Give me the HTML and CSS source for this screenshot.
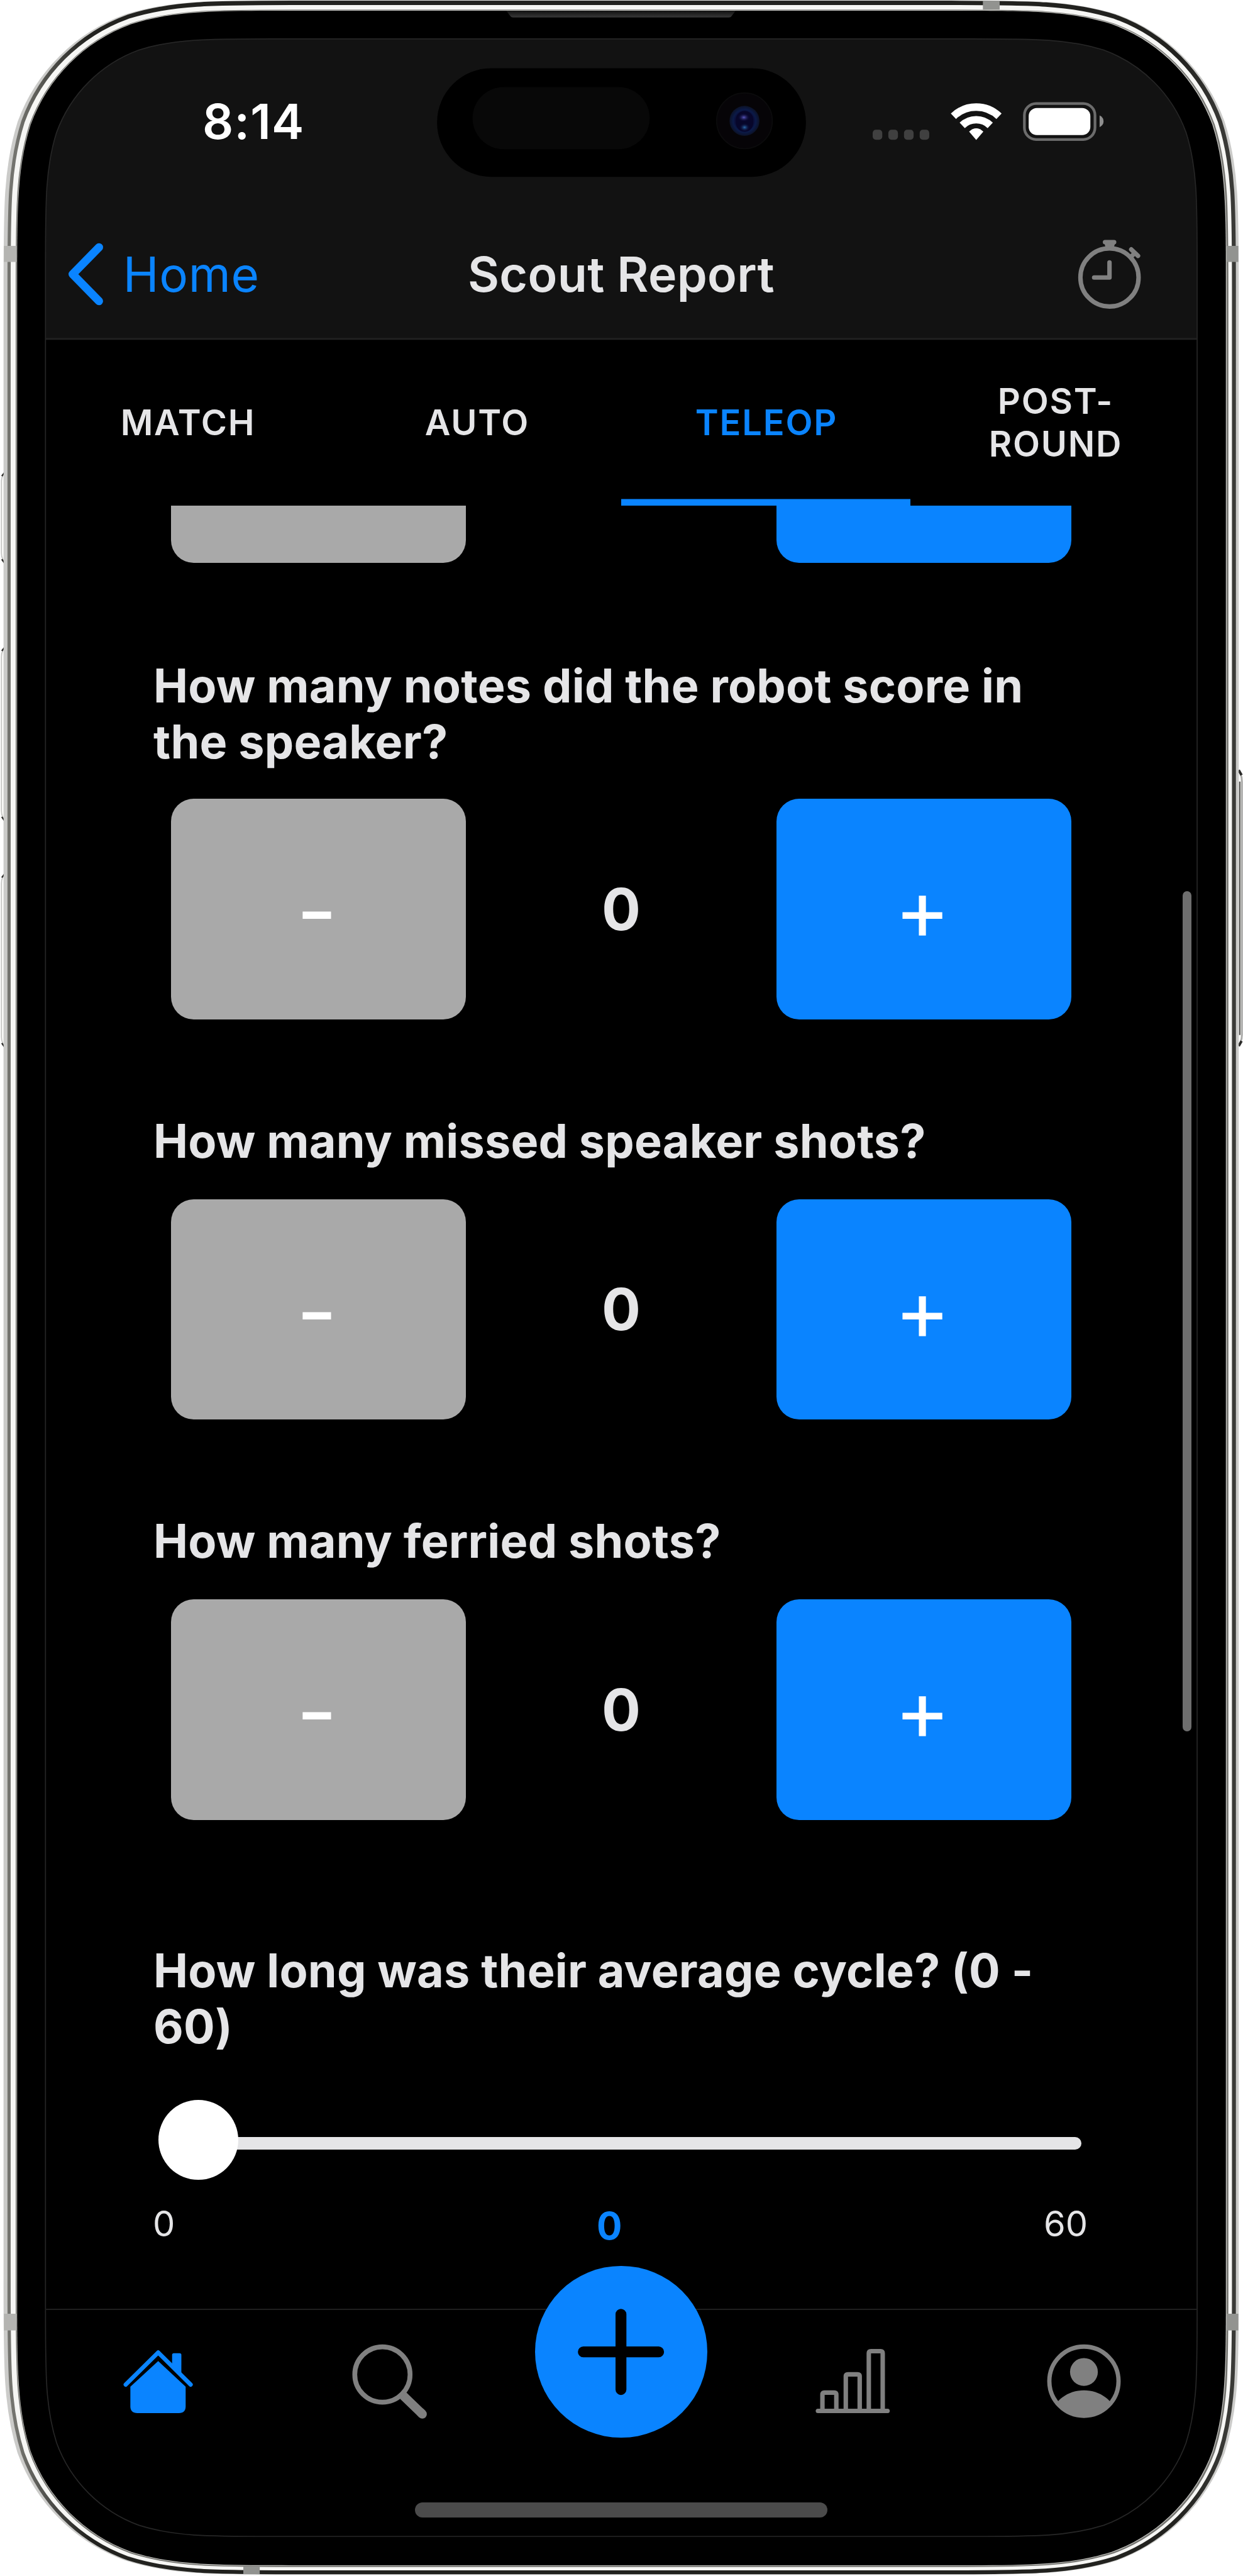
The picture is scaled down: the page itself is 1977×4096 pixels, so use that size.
FILE: index.html
```html
<!DOCTYPE html>
<html lang="en">
<head>
<meta charset="utf-8">
<title>Scout Report</title>
<link rel="stylesheet" href="styles.css">
</head>
<body>
<div class="phone">
  <svg class="frame" viewBox="0 0 3484 7218" preserveAspectRatio="none" aria-hidden="true">
    <defs>
      <path id="body" d="M-1694,-2805.5c0,-222.7 0,-334.1 37.9,-454c47.6,-130.9 150.7,-234 281.6,-281.6c119.9,-37.9 231.3,-37.9 454,-37.9H920.5c222.7,0 334.1,0 454,37.9c130.9,47.6 234,150.7 281.6,281.6c37.9,119.9 37.9,231.3 37.9,454V2805.5c0,222.7 0,334.1 -37.9,454c-47.6,130.9 -150.7,234 -281.6,281.6c-119.9,37.9 -231.3,37.9 -454,37.9H-920.5c-222.7,0 -334.1,0 -454,-37.9c-130.9,-47.6 -234,-150.7 -281.6,-281.6c-37.9,-119.9 -37.9,-231.3 -37.9,-454Z"/>
      <path id="glass" d="M127.500,743.400c0,-182.7 0,-274 31.1,-372.3c39.1,-107.300 123.6,-191.900 231,-231c98.3,-31.100 189.7,-31.100 372.3,-31.100H2721.100c182.7,0 274,0 372.3,31.1c107.3,39.1 191.9,123.6 231,231c31.1,98.3 31.1,189.7 31.1,372.3V6472.600c0,182.7 0,274 -31.1,372.3c-39.1,107.3 -123.6,191.9 -231,231c-98.3,31.1 -189.7,31.1 -372.3,31.1H761.900c-182.700,0 -274,0 -372.3,-31.1c-107.3,-39.1 -191.9,-123.6 -231,-231c-31.1,-98.3 -31.1,-189.7 -31.1,-372.3Z"/>
      <clipPath id="glass-clip"><use href="#glass"/></clipPath>
      <linearGradient id="steel"><stop offset="0" stop-color="#74746f"/><stop offset=".06" stop-color="#22221f"/><stop offset=".96" stop-color="#22221f"/><stop offset="1" stop-color="#3a3a37"/></linearGradient>
      <linearGradient id="speaker" x2="0" y2="1"><stop offset="0" stop-color="#111"/><stop offset="1" stop-color="#383838"/></linearGradient>
      <radialGradient id="lens"><stop offset="0" stop-color="#0a0a30"/><stop offset=".55" stop-color="#0a0830"/><stop offset=".75" stop-color="#0b1a48"/><stop offset="1" stop-color="#0c1226"/></radialGradient>
      <radialGradient id="glint-top"><stop offset="0" stop-color="#5a58c0"/><stop offset="1" stop-color="#0a0830" stop-opacity="0"/></radialGradient>
      <radialGradient id="glint-bottom"><stop offset="0" stop-color="#2a6cae"/><stop offset="1" stop-color="#0a0830" stop-opacity="0"/></radialGradient>
    </defs>
    <g fill="#fcfcfa" stroke="#c4c4c2" stroke-width="3">
      <path d="M18,1324Q4,1330 4,1350V1550Q4,1570 18,1577"/>
      <path d="M18,1814Q4,1820 4,1840V2272Q4,2292 18,2299"/>
      <path d="M18,2449Q4,2455 4,2475V2906Q4,2926 18,2933"/>
      <path d="M3466,2154Q3481,2166 3481,2190V2900Q3481,2922 3466,2934" stroke="#a8a8a6" stroke-width="5"/>
    </g>
    <g fill="none" stroke="#2a2a28" stroke-width="4">
      <path d="M12,1325L5,1334M12,1577L5,1567M12,1815L5,1824M12,2299L5,2289M12,2450L5,2459M12,2933L5,2923"/>
      <path d="M3472,2158L3480,2172M3472,2931L3480,2917" stroke-width="7"/>
      <path d="M3475,2190V2900" stroke="#555552"/>
    </g>
    <use href="#body" transform="translate(1741 3607.5) scale(1.0041 .9993)" fill="#cbcbc9" stroke="#cbcbc9" stroke-width="60"/>
    <use href="#body" transform="translate(1742.5 3607.5) scale(1.0021 1.0007)" fill="url(#steel)" stroke="url(#steel)" stroke-width="48"/>
    <use href="#body" transform="translate(1741.5 3608) scale(1.0015 1)" fill="#f6f6f4" stroke="#f6f6f4" stroke-width="30"/>
    <use href="#body" transform="translate(1743.5 3610) scale(1.0009 1)" fill="#73736f" stroke="#73736f" stroke-width="8"/>
    <use href="#body" transform="translate(1742.5 3609)" fill="#c2c2be" stroke="#c2c2be" stroke-width="4"/>
    <use href="#body" transform="translate(1742 3609)"/>
    <g fill="#b4b4b1">
      <path d="M11,689H46V734H11ZM11,6483H46V6530H11Z"/>
      <path d="M3438,689H3471V734H3438ZM3438,6483H3471V6530H3438ZM2755,2H2802V27H2755ZM682,7191H728V7213H682Z" fill="#929390"/>
    </g>
    <path d="M1419,30H2062L2050,46Q2048,49 2043,49H1438Q1433,49 1431,46Z" fill="url(#speaker)"/>
    <g clip-path="url(#glass-clip)">
      <rect x="120" y="100" width="3244" height="852" fill="#121212"/>
      <rect x="120" y="947" width="3244" height="5" fill="#212121"/>
    </g>
    <use href="#glass" fill="none" stroke="#262626" stroke-width="3"/>
    <rect x="1225" y="191" width="1034" height="304.500" rx="152"/>
    <rect x="1324.500" y="244" width="496.500" height="174" rx="87" fill="#080808"/>
    <circle cx="2086.700" cy="338.600" r="78" fill="#060407" stroke="#0b0b0c" stroke-width="3"/>
    <circle cx="2086.700" cy="338.600" r="42" fill="url(#lens)"/>
    <rect x="2063" y="311" width="48" height="58" rx="24" fill="#07062a"/>
    <ellipse cx="2085" cy="329" rx="17" ry="12" fill="url(#glint-top)"/>
    <ellipse cx="2087" cy="357" rx="15" ry="12" fill="url(#glint-bottom)"/>
  </svg>

  <main class="screen">
    <header class="status">
      <span class="clock">8:14</span>
      <div class="status-icons">
        <svg class="signal" viewBox="2448 363 159 29"><g fill="#404040"><rect x="2448" y="363.500" width="27" height="28" rx="9"/><rect x="2492" y="363.500" width="27" height="28" rx="9"/><rect x="2536" y="363.500" width="27" height="28" rx="9"/><rect x="2580" y="363.500" width="27" height="28" rx="9"/></g></svg>
        <svg class="wifi" viewBox="-70 -103 140 103"><g fill="none" stroke="#fff" stroke-width="21"><path d="M-63.900,-66.200A92,92 0 0 1 63.900,-66.200M-39.300,-40.600A56.500,56.500 0 0 1 39.300,-40.600"/></g><path d="M-20,-23Q0,-42 20,-23L0,0Z" fill="#fff"/></svg>
        <svg class="battery" viewBox="2869 285 227 110"><rect x="2873" y="289.500" width="198" height="101" rx="33" fill="none" stroke="#6c6c6c" stroke-width="7.500"/><rect x="2885" y="302" width="173" height="76" rx="23" fill="#fff"/><path d="M3084,323Q3095,329 3095,339.500Q3095,350 3084,356Z" fill="#8e8e8e"/></svg>
      </div>
    </header>

    <nav class="navbar">
      <a class="back"><svg class="chevron" viewBox="188 680 100 173"><path d="M277,691L203,766.500L277,842" fill="none" stroke="#0a84ff" stroke-width="23" stroke-linecap="round" stroke-linejoin="round"/></svg><span class="back-label">Home</span></a>
      <h1 class="title">Scout Report</h1>
      <svg class="timer" viewBox="3020 670 182 200"><g fill="none" stroke="#808080" stroke-width="12.500" stroke-linecap="round" stroke-linejoin="round"><circle cx="3111" cy="779.500" r="81.500"/><path d="M3111,737.500V779.800H3068"/><path d="M3098.500,680.500H3124"/><path d="M3172,701L3191,719"/><path d="M3181,712L3172,721" stroke-linecap="butt"/></g><path d="M3097,684H3127L3124,692V698H3099V692Z" fill="#808080"/></svg>
    </nav>

    <div class="tabs">
      <span class="tab">MATCH</span>
      <span class="tab">AUTO</span>
      <span class="tab active">TELEOP</span>
      <span class="tab"><span>POST-<br>ROUND</span></span>
    </div>

    <section class="form">
      <div class="counter clipped"><span class="btn minus"></span><span class="btn plus"></span></div>

      <h2 class="question first">How many notes did the robot score in<br>the speaker?</h2>
      <div class="counter"><span class="btn minus">-</span><span class="count">0</span><span class="btn plus">+</span></div>

      <h2 class="question">How many missed speaker shots?</h2>
      <div class="counter"><span class="btn minus">-</span><span class="count">0</span><span class="btn plus">+</span></div>

      <h2 class="question">How many ferried shots?</h2>
      <div class="counter"><span class="btn minus">-</span><span class="count">0</span><span class="btn plus">+</span></div>

      <h2 class="question cycle">How long was their average cycle? (0 -<br>60)</h2>
      <div class="slider"><span class="thumb"></span><span class="track"></span></div>
      <div class="scale"><span>0</span><span class="value">0</span><span>60</span></div>
      <i class="scrollbar"></i>
    </section>

    <footer class="tabbar">
      <div class="tabbar-items">
        <svg class="home" viewBox="345 6584 196 178"><path fill="#0a84ff" d="M365,6688L443,6616L520,6688V6743Q520,6762 501,6762H385Q365,6762 365,6743Z"/><path fill="#0a84ff" d="M482,6625V6599Q482,6594 487,6594H503Q508,6594 508,6599V6653L482,6627Z"/><path d="M352,6682L443,6592L534,6682" fill="none" stroke="#0a84ff" stroke-width="12" stroke-linecap="round" stroke-linejoin="round"/></svg>
        <svg class="search" viewBox="988 6568 210 208"><g fill="none" stroke="#808080"><circle cx="1073" cy="6652" r="77.500" stroke-width="13.500"/><path d="M1131,6711L1185,6763" stroke-width="25"/><path d="M1180,6758L1185,6763" stroke-width="25" stroke-linecap="round"/></g></svg>
        <div class="fab"><svg class="fab-plus" viewBox="-121 -121 242 242"><path d="M-105.500,0H105.500M0,-105.500V105.500" stroke="#000" stroke-width="30.500" stroke-linecap="round"/></svg></div>
        <svg class="chart" viewBox="2284 6580 209 184"><g fill="none" stroke="#808080" stroke-width="12.500" stroke-linejoin="round" stroke-linecap="round"><path d="M2291,6755.500H2486"/><path d="M2303.500,6755V6710Q2303.500,6704 2309.500,6704H2336.500Q2342.500,6704 2342.500,6710V6755M2369,6755V6659Q2369,6653 2375,6653H2402Q2408,6653 2408,6659V6755M2433.500,6755V6594Q2433.500,6588 2439.500,6588H2466.500Q2472.500,6588 2472.500,6594V6755"/></g></svg>
        <svg class="person" viewBox="2934 6567 208 209"><circle cx="3038" cy="6671.500" r="97" fill="none" stroke="#808080" stroke-width="12"/><circle cx="3038" cy="6645.500" r="39" fill="#808080"/><path d="M2964,6729C2983,6708 3010,6697 3038,6697C3066,6697 3093,6708 3112,6729A94,94 0 0 1 2964,6729Z" fill="#808080"/></svg>
      </div>
      <div class="home-indicator"></div>
    </footer>
  </main>
</div>
</body>
</html>
```
FILE: styles.css
```css
* { box-sizing: border-box; }
body { margin: 0; background: #fff; font-family: Inter, "Liberation Sans", sans-serif; color: #e5e5e7; }
svg { display: block; overflow: visible; }
.phone { position: relative; width: 1977px; height: 4096px; overflow: hidden; }
.frame { position: absolute; inset: 0; width: 1977px; height: 4096px; }
.screen { position: relative; width: 1832px; margin-left: 72px; padding-top: 62px; }

.status { display: flex; justify-content: space-between; height: 288px; padding: 91px 148px 0 250px; }
.clock { font-size: 77px; line-height: 80px; font-weight: 600; color: #fff; letter-spacing: 1.200px; }
.status-icons { display: flex; align-items: flex-end; gap: 35px; height: 69px; }
.signal { width: 90px; height: 16.500px; }
.wifi { width: 79.400px; height: 58.400px; }
.battery { width: 128.800px; height: 62.400px; margin-bottom: -2px; }

.navbar { display: grid; grid-template-columns: 1fr auto 1fr; align-items: center; height: 190px; padding-bottom: 18px; }
.back { display: flex; align-items: center; gap: 32px; margin-left: 35px; color: #0a84ff; }
.chevron { width: 56.700px; height: 98px; }
.back-label { font-size: 76.500px; line-height: 80px; letter-spacing: .700px; }
.title { margin: 0; font-size: 77px; line-height: 80px; font-weight: 600; letter-spacing: .300px; }
.timer { width: 103.300px; height: 113.500px; margin-right: 88px; justify-self: end; }

.tabs { display: grid; grid-template-columns: repeat(4, 1fr); height: 263.500px; margin: 0 -4px; font-size: 56px; line-height: 67.400px; font-weight: 600; letter-spacing: 1.800px; text-align: center; }
.tab { display: grid; place-items: center; padding: 2px 0 0 2px; }
.tab.active { color: #0a84ff; box-shadow: inset 0 -10.500px #0a84ff; }

.form { position: relative; height: 2867px; padding: 0 172px; }
.counter { display: flex; justify-content: space-between; align-items: center; height: 350.500px; padding: 0 28px; }
.btn { display: grid; place-items: center; width: 469px; height: 100%; padding-right: 5px; border-radius: 36px; background: #a9a9a9; color: #fff; font-size: 134px; line-height: 1; font-weight: 400; }
.btn.minus { padding-top: 5px; font-size: 141px; }
.btn.plus { background: #0a84ff; }
.count { font-size: 92px; font-weight: 700; }
.clipped { height: 91.500px; }
.clipped .btn { border-radius: 0 0 36px 36px; }
.question { margin: 149px 0 48px; font-size: 73.700px; line-height: 89px; font-weight: 700; letter-spacing: .220px; white-space: nowrap; }
.question.first { margin: 150.500px 0 46.500px; }
.question.cycle { margin: 195px 0 72.500px; }
.slider { display: flex; align-items: center; padding: 0 12px 0 8px; }
.thumb { position: relative; z-index: 1; width: 127px; height: 127px; border-radius: 50%; background: #fff; }
.track { flex: 1; height: 19.500px; margin: 11px 0 0 -10px; background: #e5e5e7; border-radius: 0 10px 10px 0; }
.scale { display: flex; justify-content: space-between; height: 68px; margin: 36px 2px 0 -1px; font-size: 56px; line-height: 68px; }
.value { padding-top: 3px; color: #0a84ff; font-size: 60px; font-weight: 700; }
.scrollbar { position: absolute; right: 9px; top: 613px; width: 14.500px; height: 1336px; border-radius: 8px; background: #6e6e6e; }

.tabbar { height: 363px; border-top: 2px solid #1f1f1f; }
.tabbar-items { display: grid; grid-template-columns: repeat(5, 1fr); place-items: center; height: 228px; margin: 0 -4px; }
.home { width: 111.200px; height: 101px; }
.search { width: 119.200px; height: 118px; }
.chart { width: 118.600px; height: 104.400px; }
.person { width: 118px; height: 118.600px; }
.fab { display: grid; place-items: center; align-self: start; width: 273.500px; height: 273.500px; margin-top: -70px; border-radius: 50%; background: #0a84ff; }
.fab-plus { width: 137.300px; height: 137.300px; }
.home-indicator { width: 656px; height: 24px; margin: 78px auto 0; border-radius: 12px; background: #4b4b4b; }
```
